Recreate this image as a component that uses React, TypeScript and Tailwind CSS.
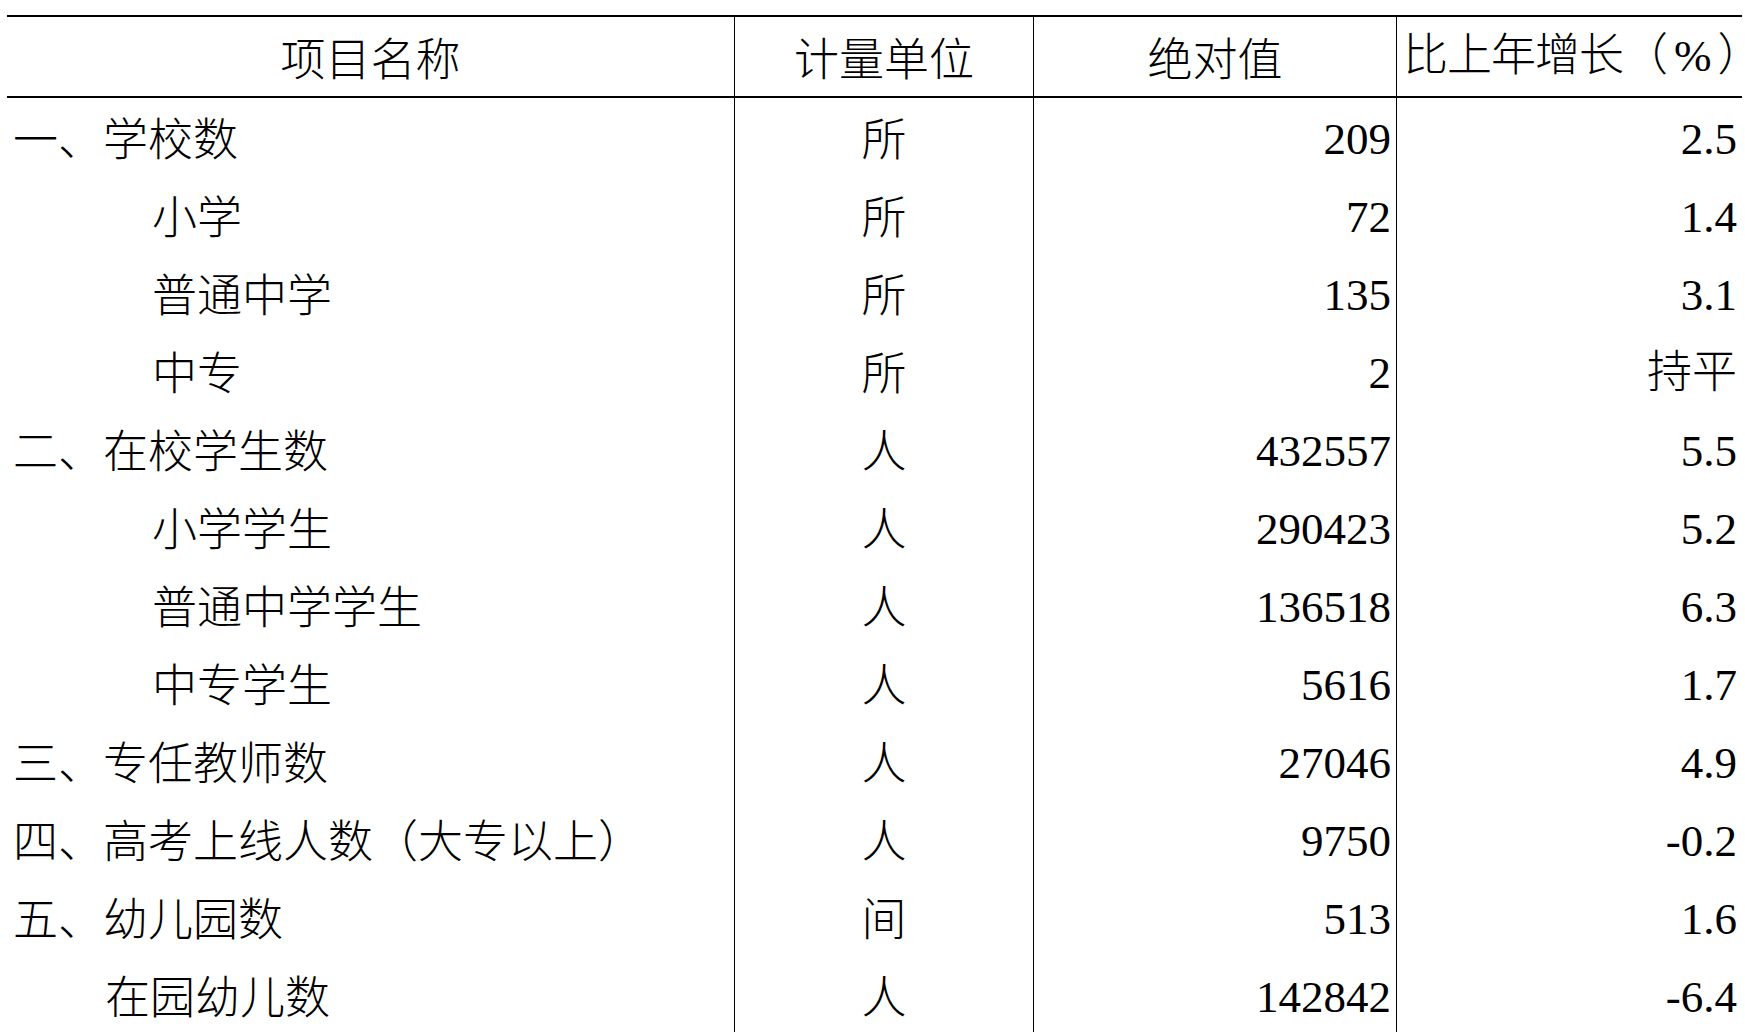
import React from "react";

type Row = {
  name: string;
  level: 1 | 2 | 3;
  unit: string;
  value: string;
  pct: string;
};

const ROWS: Row[] = [
  { name: "一、学校数", level: 1, unit: "所", value: "209", pct: "2.5" },
  { name: "小学", level: 2, unit: "所", value: "72", pct: "1.4" },
  { name: "普通中学", level: 2, unit: "所", value: "135", pct: "3.1" },
  { name: "中专", level: 2, unit: "所", value: "2", pct: "持平" },
  { name: "二、在校学生数", level: 1, unit: "人", value: "432557", pct: "5.5" },
  { name: "小学学生", level: 2, unit: "人", value: "290423", pct: "5.2" },
  { name: "普通中学学生", level: 2, unit: "人", value: "136518", pct: "6.3" },
  { name: "中专学生", level: 2, unit: "人", value: "5616", pct: "1.7" },
  { name: "三、专任教师数", level: 1, unit: "人", value: "27046", pct: "4.9" },
  { name: "四、高考上线人数（大专以上）", level: 1, unit: "人", value: "9750", pct: "-0.2" },
  { name: "五、幼儿园数", level: 1, unit: "间", value: "513", pct: "1.6" },
  { name: "在园幼儿数", level: 3, unit: "人", value: "142842", pct: "-6.4" },
];

const GRID = "grid grid-cols-[727px_299px_363px_346px]";
const CJK = "font-['Noto_Sans_CJK_SC',sans-serif] font-light";
const NUM = "font-['Liberation_Serif','Noto_Sans_CJK_SC',serif] font-light";

const indent = {
  1: "pl-[6px]",
  2: "pl-[145px]",
  3: "pl-[98px]",
} as const;

export default function App() {
  return (
    <div className="h-[1032px] w-[1745px] overflow-hidden bg-white text-black">
      <div className="ml-[7px] mt-[15px] w-[1735px] border-t-2 border-black">
        <div className={`${GRID} h-[81px] border-b-2 border-black text-[45px] leading-[79px]`}>
          <div className={`${CJK} text-center whitespace-nowrap`}>项目名称</div>
          <div className={`${CJK} border-l border-black text-center whitespace-nowrap`}>计量单位</div>
          <div className={`${CJK} border-l border-black text-center whitespace-nowrap`}>绝对值</div>
          <div className={`${NUM} border-l border-black pl-[6px] whitespace-nowrap`}>
            <span className="tracking-[-1px]">比上年增长</span>
            <span>（</span>
            <span className="mx-[6px]">%</span>
            <span className="tracking-[-26px]">）</span>
          </div>
        </div>

        {ROWS.map((r) => (
          <div key={r.name} className={`${GRID} h-[78px] text-[45px] leading-[78px]`}>
            <div className={`${CJK} ${indent[r.level]} whitespace-nowrap`}>{r.name}</div>
            <div className={`${CJK} border-l border-black text-center`}>{r.unit}</div>
            <div className={`${NUM} border-l border-black pr-[5px] pt-[2px] text-right`}>{r.value}</div>
            <div className={`${NUM} border-l border-black pr-[5px] pt-[2px] text-right whitespace-nowrap`}>
              {r.pct}
            </div>
          </div>
        ))}
      </div>
    </div>
  );
}
